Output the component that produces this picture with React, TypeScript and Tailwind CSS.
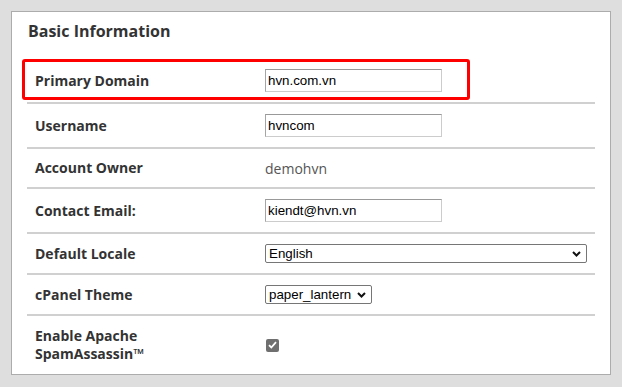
import React from 'react';

const font = { fontFamily: '"Open Sans", "Liberation Sans", sans-serif' };

const Row = ({ label, h, children }: { label: React.ReactNode; h: string; children: React.ReactNode }) => (
    <div className={`flex items-center border-b-2 border-[#d0d0d0] ${h}`}>
        <div className="w-[238px] shrink-0 pl-2 text-[14px] font-bold leading-[18px] text-[#333]">{label}</div>
        <div className="flex items-center">{children}</div>
    </div>
);

const TextInput = ({ value }: { value: string }) => (
    <input
        readOnly
        value={value}
        className="block h-[23px] w-[177px] border border-t-[#999] border-l-[#a5a5a5] border-r-[#ccc] border-b-[#ccc] bg-white px-[2px] text-[13.33px] text-black outline-none"
        style={{ fontFamily: '"Liberation Sans", Arial, sans-serif' }}
    />
);

const Select = ({ value, width }: { value: string; width: string }) => (
    <div className={`relative ${width}`}>
        <select
            defaultValue={value}
            className="block h-[19px] w-full appearance-none rounded-[2px] border border-[#767676] bg-white pl-[3px] pr-5 text-[13.33px] leading-[17px] text-black outline-none"
            style={{ fontFamily: '"Liberation Sans", Arial, sans-serif' }}
        >
            <option>{value}</option>
        </select>
        <svg className="pointer-events-none absolute right-[6px] top-[7px]" width="9" height="6" viewBox="0 0 9 6">
            <path d="M1 1l3.5 3.5L8 1" fill="none" stroke="#111" strokeWidth="2" />
        </svg>
    </div>
);

export default function App() {
    return (
        <div className="h-[387px] w-[622px] bg-[#dedede] pl-[11px] pt-[11px]" style={font}>
            <div className="relative h-[364px] w-[600px] border border-[#acacac] bg-white px-[15px] pt-[8px]">
                <h2 className="mb-[17px] pl-px text-[16px] font-bold leading-[22px] text-[#333]">Basic Information</h2>

                <Row label="Primary Domain" h="h-[45px]">
                    <TextInput value="hvn.com.vn" />
                </Row>
                <Row label="Username" h="h-[45px]">
                    <TextInput value="hvncom" />
                </Row>
                <Row label="Account Owner" h="h-[40px]">
                    <span className="text-[14px] text-[#555]">demohvn</span>
                </Row>
                <Row label="Contact Email:" h="h-[45px]">
                    <TextInput value="kiendt@hvn.vn" />
                </Row>
                <Row label="Default Locale" h="h-[41px]">
                    <Select value="English" width="w-[322px]" />
                </Row>
                <Row label="cPanel Theme" h="h-[41px]">
                    <Select value="paper_lantern" width="w-[107px]" />
                </Row>
                <div className="flex h-[58px] items-center">
                    <div className="w-[238px] shrink-0 pl-2 text-[14px] font-bold leading-[18px] text-[#333]">
                        Enable Apache
                        <br />
                        SpamAssassin™
                    </div>
                    <span className="ml-px flex h-[13px] w-[13px] items-center justify-center rounded-[2px] bg-[#6f6f6f]">
                        <svg width="9" height="8" viewBox="0 0 9 8">
                            <path d="M1 4.2l2.3 2.3L8 1.2" fill="none" stroke="#fff" strokeWidth="1.8" />
                        </svg>
                    </span>
                </div>

                <div className="pointer-events-none absolute left-[10px] top-[47px] h-[41px] w-[448px] rounded-[3px] border-[3px] border-[#ff0000]" />
            </div>
        </div>
    );
}
